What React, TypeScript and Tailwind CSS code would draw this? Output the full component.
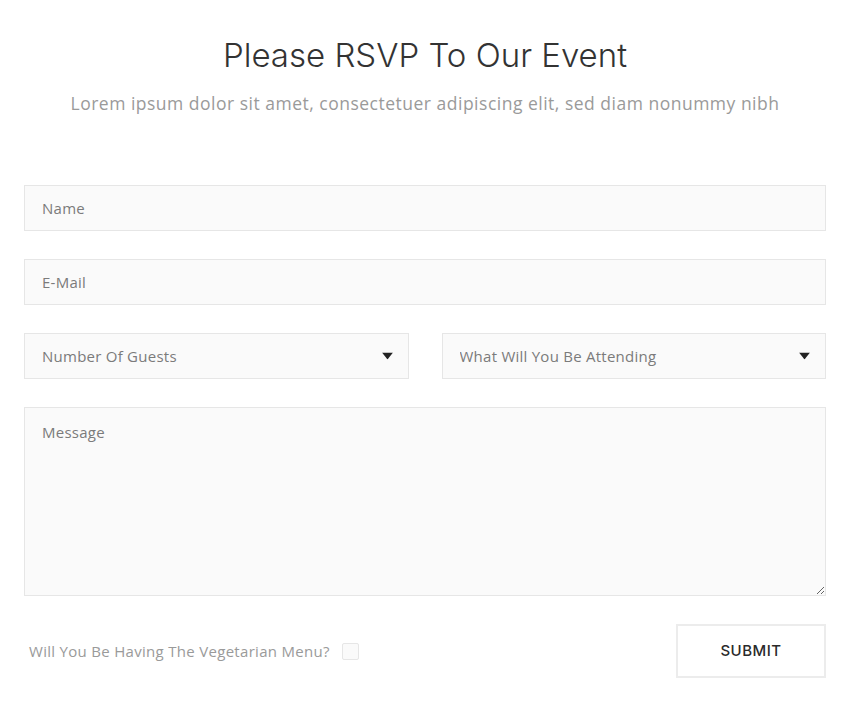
import React from 'react';

const baseField =
  'w-full h-[46px] bg-[#fafafa] border border-[#e6e6e6] px-[17px] text-[15px] tracking-[0.25px] outline-none';
const fieldClass = `${baseField} text-[#555] placeholder:text-[#7b7b7b]`;

const Caret = () => (
  <svg
    className="pointer-events-none absolute right-[16px] top-1/2 -translate-y-1/2"
    width="11"
    height="7"
    viewBox="0 0 11 7"
  >
    <path d="M0 0h11L5.5 7z" fill="#222" />
  </svg>
);

const SelectField: React.FC<{ label: string; options: string[] }> = ({ label, options }) => (
  <div className="relative flex-1">
    <select
      defaultValue=""
      className={`${baseField} appearance-none text-[#7b7b7b]`}
      style={{ fontFamily: '"Open Sans", "Noto Sans", sans-serif' }}
    >
      <option value="" disabled>
        {label}
      </option>
      {options.map((o) => (
        <option key={o} value={o}>
          {o}
        </option>
      ))}
    </select>
    <Caret />
  </div>
);

export default function App() {
  return (
    <div
      className="bg-white min-h-[714px] px-6 pt-[33px]"
      style={{ fontFamily: '"Open Sans", "Noto Sans", sans-serif' }}
    >
      <div className="text-center">
        <h1
          className="text-[33px] leading-[44px] text-[#333] font-light"
          style={{ fontFamily: '"Inter", "Noto Sans", sans-serif', fontWeight: 300 }}
        >
          Please RSVP To Our Event
        </h1>
        <p className="mt-[13px] text-[17.5px] leading-[26px] tracking-[0.5px] text-[#9a9a9a]">
          Lorem ipsum dolor sit amet, consectetuer adipiscing elit, sed diam nonummy nibh
        </p>
      </div>

      <form className="mt-[69px] flex flex-col gap-[28px]">
        <input type="text" placeholder="Name" className={fieldClass} />
        <input type="email" placeholder="E-Mail" className={fieldClass} />
        <div className="flex gap-[33px]">
          <SelectField label="Number Of Guests" options={['1', '2', '3', '4']} />
          <SelectField label="What Will You Be Attending" options={['Ceremony', 'Reception', 'Both']} />
        </div>
        <textarea
          placeholder="Message"
          className="w-full h-[189px] bg-[#fafafa] border border-[#e6e6e6] px-[17px] py-[13px] text-[15px] tracking-[0.25px] text-[#555] placeholder:text-[#7b7b7b] outline-none"
        />
        <div className="flex items-center justify-between pl-[5px]">
          <label className="flex items-center gap-[12px] text-[15px] tracking-[0.3px] text-[#9a9a9a]">
            Will You Be Having The Vegetarian Menu?
            <input
              type="checkbox"
              className="appearance-none w-[17px] h-[17px] bg-[#fafafa] border border-[#e6e6e6] rounded-[2px]"
            />
          </label>
          <button
            type="button"
            className="w-[150px] h-[54px] border-2 border-[#ececec] bg-white text-[15px] font-medium tracking-[0.5px] text-[#2a2a2a]"
            style={{ fontFamily: '"Inter", "Noto Sans", sans-serif' }}
          >
            SUBMIT
          </button>
        </div>
      </form>
    </div>
  );
}
